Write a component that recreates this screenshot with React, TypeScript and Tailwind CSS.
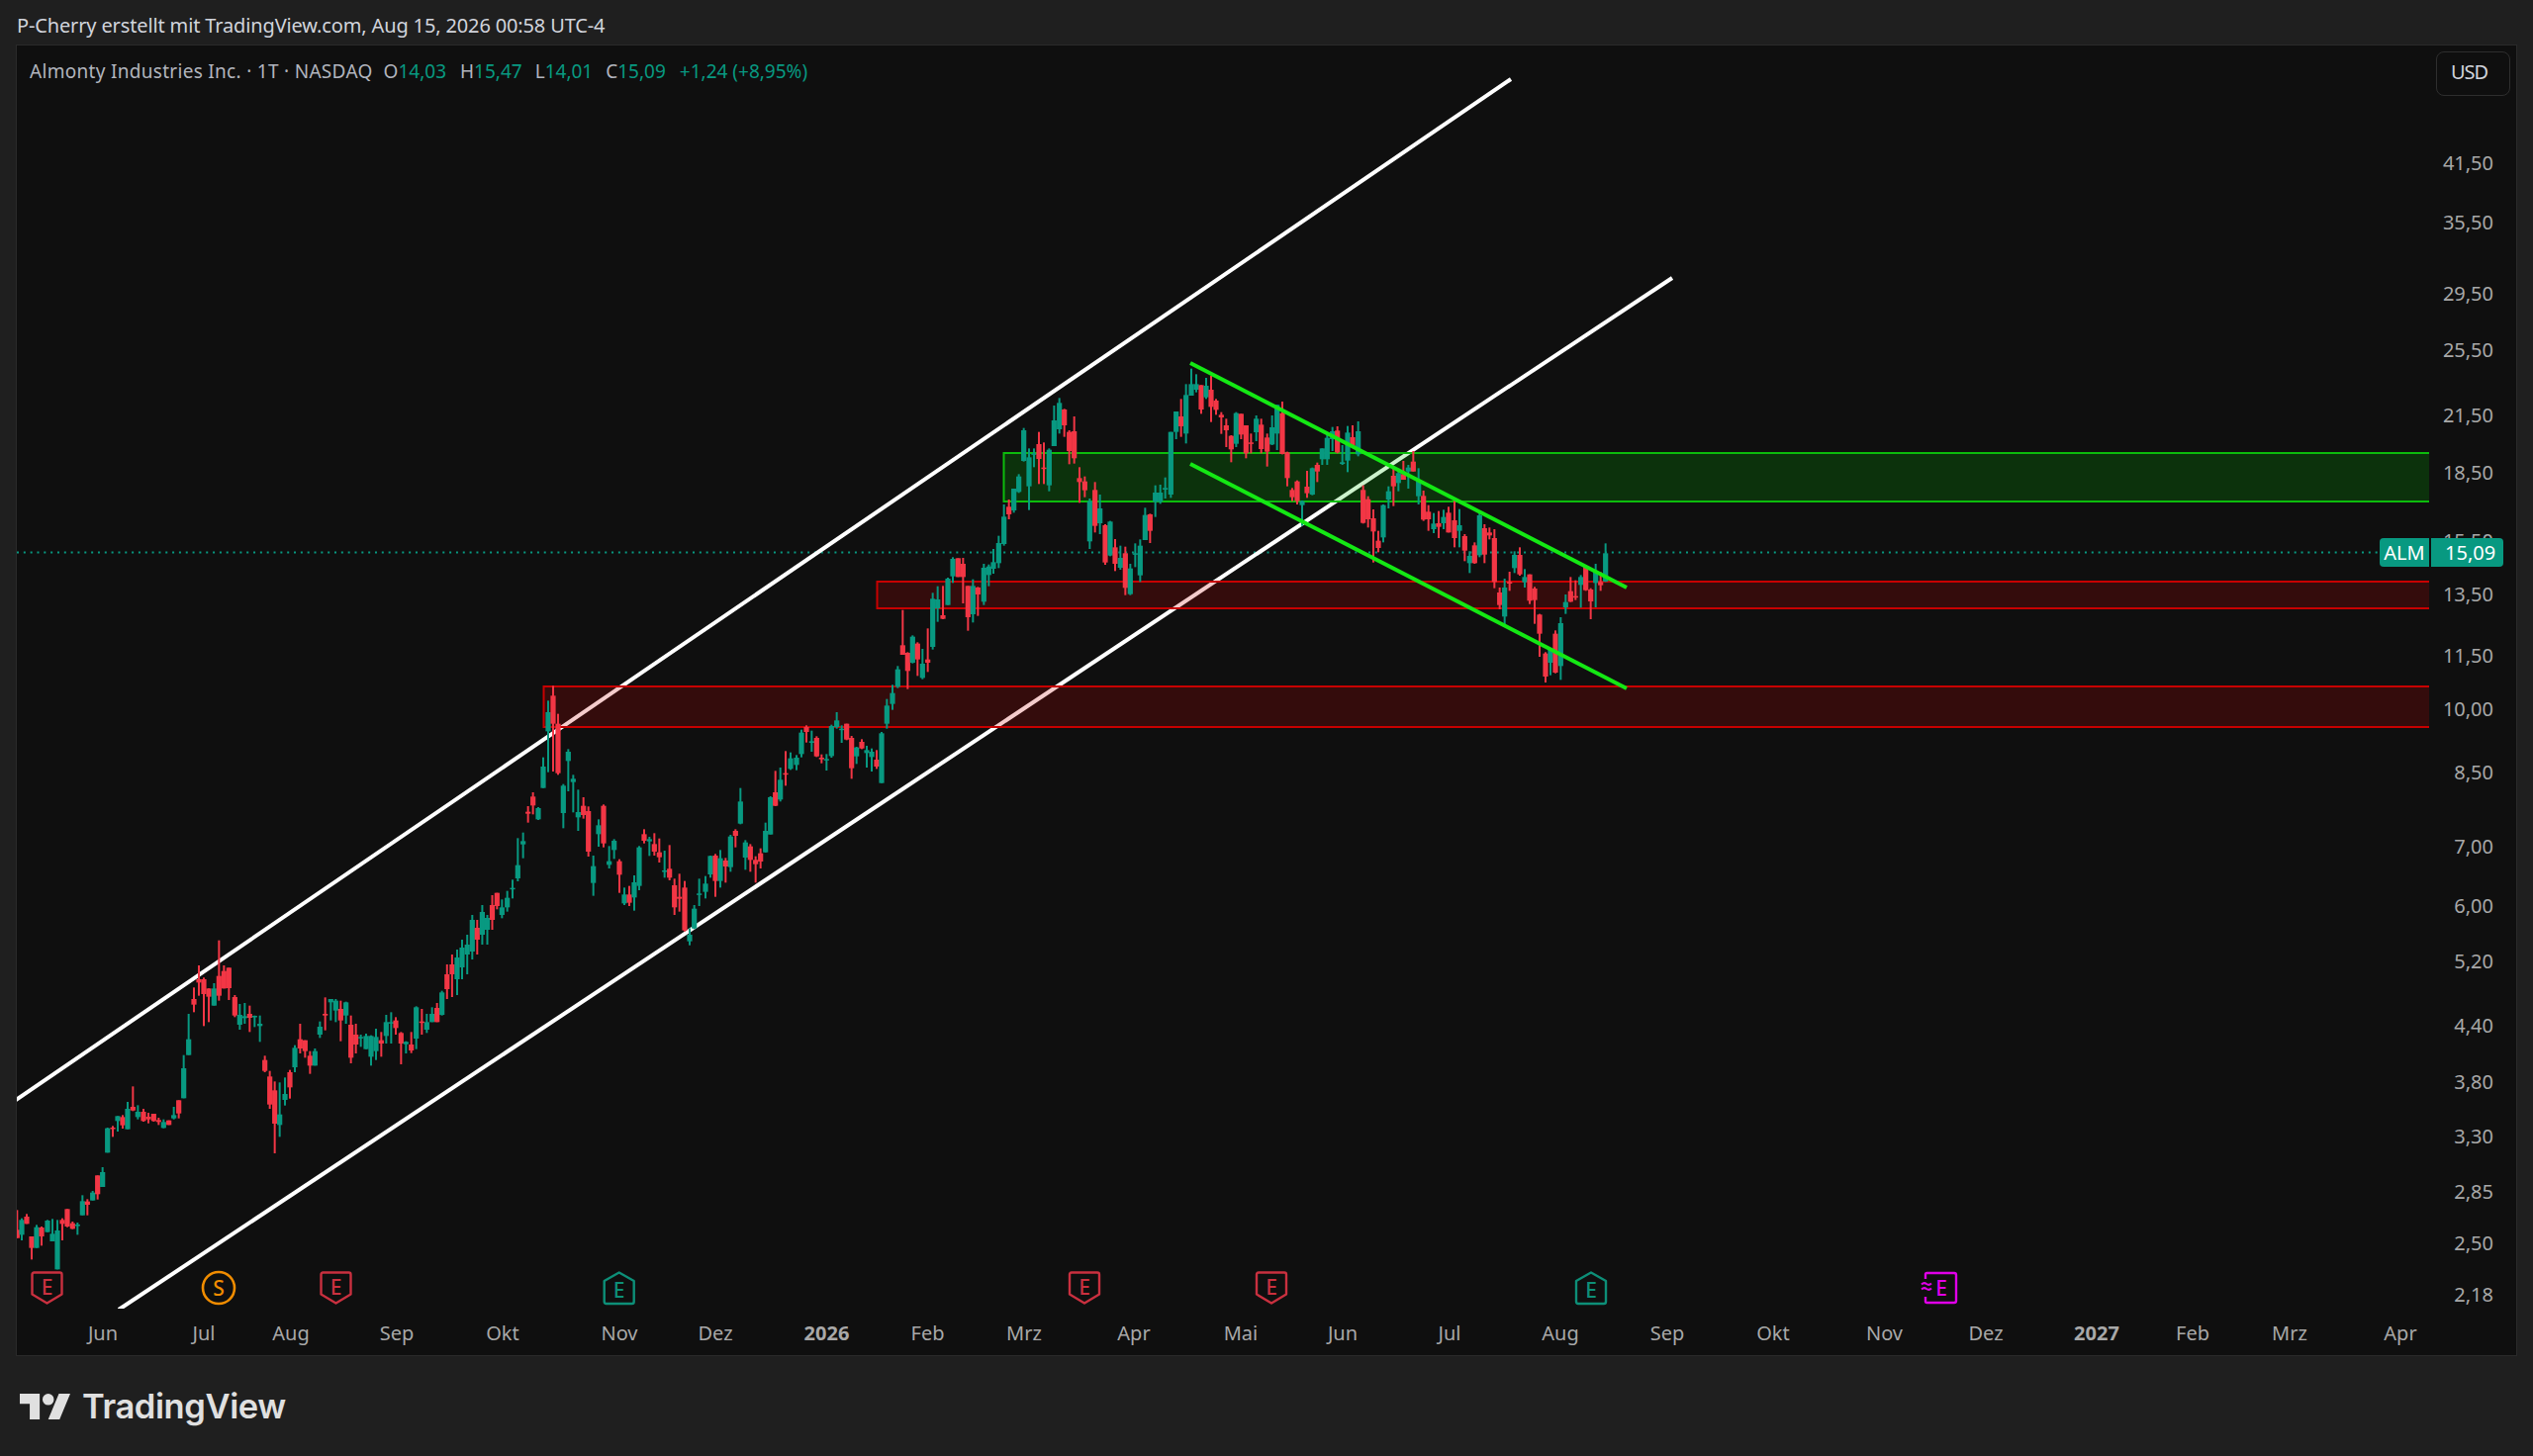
type Candle = [number, number, number, number, number, "r" | "g"];
type Segment = { ox: number; oy: number; s: number; rows: Candle[] };

// candle rows are [x, high, bodyTop, bodyBottom, low, colour]
const segments: Segment[] = [
  {
    ox: 0, oy: 940, s: 3,
    rows: [
      [52,850,910,935,935,"r"],[66,875,880,925,942,"g"],[81,862,870,892,892,"r"],[96,930,930,965,1000,"r"],[111,895,902,965,965,"g"],
      [126,900,903,930,958,"r"],[144,880,882,917,917,"g"],[159,877,922,945,945,"g"],[174,880,912,1030,1030,"g"],[189,875,880,892,942,"r"],
      [204,847,847,900,902,"r"],[220,885,890,907,908,"r"],[235,888,894,898,925,"g"],[250,805,823,866,866,"g"],[265,817,824,834,866,"r"],
      [281,792,797,821,821,"g"],[296,745,745,802,818,"r"],[311,720,735,780,780,"g"],[326,600,602,676,676,"g"],[342,595,600,604,628,"r"],
      [357,565,565,580,612,"g"],[372,562,568,593,603,"r"],[387,522,543,605,605,"g"],[403,475,537,548,550,"r"],[418,532,552,568,575,"g"],
      [435,543,552,580,582,"r"],[450,555,567,575,587,"r"],[466,558,558,580,582,"r"],[481,570,577,583,592,"r"],[496,575,583,601,602,"g"],
      [512,578,578,592,592,"r"],[527,537,562,572,575,"g"],[542,517,517,557,572,"r"],[557,380,420,511,511,"g"],[572,255,332,380,380,"g"],
      [588,175,210,227,250,"r"],[603,108,150,160,200,"r"],[618,145,150,195,292,"r"],[633,178,178,203,280,"r"],[649,162,178,230,230,"g"],
      [664,32,140,200,215,"r"],[679,108,125,178,178,"r"],[694,115,115,177,213,"r"],[712,198,204,260,265,"r"],[727,225,258,288,303,"g"],
      [742,222,262,268,285,"g"],[757,230,255,267,310,"r"],[772,260,261,263,295,"g"],[788,260,285,292,340,"g"],[803,382,395,428,432,"r"],
      [818,428,445,530,543,"r"],[833,460,487,588,678,"r"],[848,463,560,592,628,"g"],[864,448,498,516,533,"g"],[879,425,432,478,512,"r"],
      [894,350,358,417,432,"g"],[910,285,332,360,375,"r"],[925,335,335,368,388,"r"],[940,368,382,412,437,"r"],[955,360,368,412,412,"g"],
      [970,278,294,318,328,"g"],[986,205,255,260,305,"r"],[1003,210,210,220,275,"g"],[1018,210,215,245,280,"g"],[1033,215,240,275,338,"r"],
      [1049,218,220,260,285,"g"],[1064,260,288,388,405,"r"],[1079,285,318,348,375,"r"],[1094,318,325,328,355,"g"],[1110,315,322,362,362,"g"],
      [1125,320,322,385,412,"g"],[1140,300,325,368,395,"g"],[1156,310,335,345,385,"r"],[1171,258,280,322,345,"g"],[1186,250,280,283,345,"g"],
      [1200,265,275,298,318,"r"],
    ],
  },
  {
    ox: 200, oy: 1000, s: 3,
    rows: [
      [616,130,133,165,228,"r"],[631,158,160,167,195,"g"],[647,130,168,186,194,"r"],[662,52,55,150,182,"g"],[679,60,98,102,138,"r"],
      [694,75,100,123,133,"g"],[710,55,75,100,100,"g"],[725,42,57,100,100,"r"],[740,5,10,78,80,"g"],
    ],
  },
  {
    ox: 0, oy: 0, s: 1,
    rows: [
      [451.8,975,985,1000,1010,"r"],[456.9,965,975,985,1008,"r"],[462,960,968,990,1006,"g"],[467,950,958,978,990,"g"],[472.2,945,955,965,985,"g"],
      [477.3,925,930,962,970,"g"],[482.3,930,938,950,965,"r"],[487.4,915,922,945,955,"g"],[492.5,925,928,940,955,"g"],[497.5,905,915,930,940,"r"],
    ],
  },
  {
    ox: 500, oy: 680, s: 3,
    rows: [
      [7,668,668,708,718,"r"],[22,688,712,735,745,"g"],[38,662,683,712,725,"g"],[54,628,653,657,685,"g"],[70,502,584,624,633,"g"],
      [86,485,511,521,563,"g"],[101,405,422,428,455,"r"],[116,363,376,403,430,"r"],[132,408,411,445,447,"g"],[147,257,285,350,350,"g"],
      [162,85,120,178,302,"g"],[177,40,70,155,300,"r"],[192,125,155,305,310,"r"],[208,338,343,426,472,"g"],[223,232,240,268,360,"g"],
      [238,310,322,332,424,"g"],[253,355,423,439,480,"g"],[269,378,404,432,443,"r"],[284,406,420,543,558,"r"],[299,555,587,638,677,"g"],
      [315,445,463,490,528,"g"],[330,400,404,518,530,"r"],[347,526,572,583,594,"g"],[362,505,510,538,565,"g"],[378,566,572,613,668,"r"],
      [393,652,673,700,705,"g"],[408,647,673,698,708,"r"],[423,615,636,682,722,"g"],[438,526,530,647,660,"g"],[453,475,490,510,518,"r"],
      [469,498,505,512,556,"g"],[484,487,520,543,555,"r"],[499,503,545,560,576,"r"],[515,540,600,603,622,"g"],[530,523,595,622,630,"r"],
      [545,625,645,712,735,"r"],[560,610,680,686,725,"r"],[576,632,652,782,785,"r"],[591,775,795,815,827,"g"],[605,705,716,776,778,"g"],
      [620,625,670,674,708,"g"],[639,617,640,665,685,"g"],[654,555,556,612,622,"g"],[669,550,555,632,680,"r"],[684,538,563,632,652,"g"],
      [700,562,570,588,637,"r"],[715,492,497,590,604,"g"],[730,475,480,495,530,"r"],[745,350,391,458,460,"g"],[760,508,515,561,598,"g"],
      [775,520,527,568,604,"r"],[791,557,568,581,637,"r"],[806,533,548,573,594,"r"],[821,455,480,545,546,"g"],[836,375,378,491,491,"g"],
      [851,298,363,404,405,"r"],[866,288,325,385,391,"g"],[882,238,305,309,343,"r"],[897,242,260,292,295,"g"],[915,250,258,280,296,"g"],
      [930,173,182,247,257,"g"],[945,160,165,180,212,"r"],[961,176,208,213,240,"g"],[976,193,198,254,256,"r"],[991,248,258,263,275,"r"],
      [1006,247,262,266,297,"g"],[1021,158,162,253,258,"g"],[1037,120,145,165,170,"g"],[1052,160,170,174,213,"g"],[1067,155,155,203,205,"r"],
      [1082,192,198,290,322,"r"],[1097,225,227,254,277,"g"],[1113,202,210,230,232,"r"],[1128,222,235,244,288,"g"],[1143,230,240,256,300,"g"],
      [1158,235,264,285,292,"r"],[1173,180,184,335,335,"g"],[1189,80,100,155,170,"g"],
    ],
  },
  {
    ox: 880, oy: 560, s: 3,
    rows: [
      [66,397,422,455,473,"g"],[82,340,350,403,407,"g"],[97,170,277,306,306,"r"],[112,298,300,355,410,"r"],[127,247,251,330,332,"g"],
      [142,268,272,320,370,"r"],[157,288,333,376,380,"g"],[173,226,320,330,358,"r"],[188,118,136,282,290,"g"],[203,98,138,165,206,"g"],
      [219,97,186,197,198,"r"],[234,72,75,155,155,"g"],[249,10,15,68,88,"g"],[265,13,13,70,70,"r"],[280,12,30,70,150,"r"],
      [295,97,97,192,233,"r"],[310,77,97,183,208,"g"],[325,100,102,123,188,"r"],[343,30,42,145,155,"g"],[358,32,38,64,98,"g"],
    ],
  },
  {
    ox: 1000, oy: 370, s: 3,
    rows: [
      [12,555,595,615,630,"g"],[28,515,537,598,613,"g"],[44,420,457,540,545,"g"],[59,405,427,450,465,"r"],[74,372,372,438,445,"g"],
      [89,328,335,382,385,"g"],[104,188,195,288,290,"g"],[120,250,277,365,437,"g"],[135,250,265,268,307,"g"],[150,200,237,282,358,"r"],
      [165,232,308,312,358,"r"],[181,250,254,362,380,"g"],[196,120,165,243,243,"g"],[212,97,112,192,205,"g"],[227,130,132,180,215,"r"],
      [242,195,200,258,298,"r"],[257,153,198,280,296,"r"],[273,307,340,352,415,"r"],[289,335,350,377,398,"r"],[304,402,410,532,555,"g"],
      [320,352,376,485,505,"r"],[335,390,432,477,510,"g"],[351,480,483,596,603,"r"],[366,470,472,575,577,"g"],[381,525,550,600,622,"r"],
      [397,545,582,612,618,"g"],[412,548,568,673,695,"r"],[427,600,614,692,695,"g"],[442,538,568,572,610,"g"],[457,526,545,635,655,"g"],
      [472,430,452,528,528,"g"],[487,448,450,500,537,"r"],[503,362,384,412,458,"g"],[518,360,384,412,418,"g"],[533,338,370,375,402,"g"],
      [550,200,200,390,400,"g"],[566,138,138,200,222,"g"],[581,100,153,183,215,"r"],[596,55,88,205,235,"g"],[612,8,55,90,90,"g"],
      [627,25,55,72,80,"g"],[642,58,58,132,145,"r"],[657,36,60,95,100,"g"],[672,30,72,124,170,"r"],[687,100,105,133,148,"r"],
      [703,140,148,156,206,"r"],[718,160,180,195,246,"r"],[733,210,212,253,292,"r"],[748,140,143,236,246,"g"],[763,145,145,208,222,"r"],
      [778,180,180,265,280,"r"],[793,205,232,235,265,"r"],[809,150,160,201,228,"g"],[824,160,178,252,265,"r"],[842,205,217,260,305,"r"],
      [857,150,186,238,240,"g"],[872,118,118,205,255,"g"],[888,108,143,267,268,"r"],[903,260,262,340,365,"r"],[918,370,376,398,410,"r"],
      [933,347,350,410,420,"r"],[948,408,410,422,485,"g"],[963,318,366,386,400,"r"],[979,308,310,390,392,"g"],[994,293,300,320,352,"r"],
      [1009,250,250,283,300,"g"],[1024,205,218,283,300,"g"],[1040,185,198,222,258,"g"],[1055,183,196,262,265,"r"],[1070,240,292,297,300,"g"],
      [1086,182,202,287,322,"g"],[1101,180,216,245,245,"r"],[1118,168,198,268,274,"g"],[1133,362,376,476,478,"r"],[1148,395,404,465,490,"r"],
      [1164,435,462,502,596,"r"],[1179,500,530,552,565,"r"],[1194,420,422,520,535,"g"],
    ],
  },
  {
    ox: 1400, oy: 370, s: 3,
    rows: [
      [10,365,380,405,432,"g"],[25,305,333,365,425,"r"],[40,315,325,355,380,"g"],[55,288,328,345,345,"r"],[70,300,308,320,372,"g"],
      [85,258,290,320,320,"r"],[101,310,348,395,420,"g"],[116,378,394,466,470,"r"],[131,422,442,465,500,"r"],[147,446,478,495,507,"g"],
      [162,440,477,488,522,"r"],[177,436,458,477,495,"g"],[192,427,445,505,505,"r"],[210,402,468,522,550,"r"],[225,434,483,500,550,"g"],
      [241,510,516,560,592,"r"],[256,562,576,598,628,"g"],[271,535,544,598,600,"r"],[286,438,453,574,580,"g"],[301,480,492,572,598,"r"],
      [316,490,505,514,526,"r"],[331,495,522,655,674,"r"],[347,672,687,725,738,"r"],[362,645,672,760,790,"g"],[377,624,655,660,682,"r"],
      [392,562,573,613,628,"g"],[408,550,573,632,636,"r"],[423,616,640,656,672,"g"],[438,632,632,712,722,"r"],[453,670,675,710,782,"r"],
      [468,752,754,812,882,"r"],[486,868,872,942,960,"r"],[501,855,860,900,938,"g"],[516,802,812,930,932,"r"],[532,762,780,910,952,"g"],
      [547,693,716,732,752,"g"],[562,640,683,715,716,"r"],[577,650,698,702,710,"r"],[593,634,640,664,733,"g"],[608,604,606,680,682,"r"],
      [623,674,678,714,768,"r"],[638,600,624,658,732,"g"],[653,625,655,665,682,"r"],[668,538,568,654,655,"g"],
    ],
  },
];

const candles = segments.flatMap(({ ox, oy, s, rows }) =>
  rows.map(([x, hi, top, bot, lo, c]) => ({
    x: ox + x / s,
    hi: oy + hi / s,
    top: oy + top / s,
    bot: oy + bot / s,
    lo: oy + lo / s,
    fill: c === "r" ? "#f23645" : "#089981",
  }))
);

const prices: [string, number][] = [
  ["41,50", 165], ["35,50", 225], ["29,50", 297], ["25,50", 354], ["21,50", 420],
  ["18,50", 478], ["15,50", 547], ["13,50", 601], ["11,50", 663], ["10,00", 717],
  ["8,50", 781], ["7,00", 856], ["6,00", 916], ["5,20", 972], ["4,40", 1037],
  ["3,80", 1094], ["3,30", 1149], ["2,85", 1205], ["2,50", 1257], ["2,18", 1309],
];

const months: [string, number, boolean?][] = [
  ["Jun", 104], ["Jul", 206], ["Aug", 294], ["Sep", 401], ["Okt", 508], ["Nov", 626],
  ["Dez", 723], ["2026", 835.5, true], ["Feb", 937.5], ["Mrz", 1035], ["Apr", 1146], ["Mai", 1254],
  ["Jun", 1357], ["Jul", 1465], ["Aug", 1577], ["Sep", 1685], ["Okt", 1792], ["Nov", 1904.5],
  ["Dez", 2007], ["2027", 2119, true], ["Feb", 2216], ["Mrz", 2314], ["Apr", 2426],
];

const ShieldE = ({ cx }: { cx: number }) => (
  <g transform={`translate(${cx - 16} 1285)`}>
    <path d="M3 1.5H29Q31 1.5 31 3.5V23.5L16 32.5L1 23.5V3.5Q1 1.5 3 1.5Z" fill="#0f0f0f" stroke="#c9303f" strokeWidth="2.4" strokeLinejoin="round" />
    <text x="16" y="24" textAnchor="middle" fontSize="21" fontFamily="Noto Sans" fontWeight="500" fill="#c9303f">E</text>
  </g>
);

const HouseE = ({ cx }: { cx: number }) => (
  <g transform={`translate(${cx - 16} 1285)`}>
    <path d="M16 1.5L31 10V31Q31 33 29 33H3Q1 33 1 31V10Z" fill="#0f0f0f" stroke="#0d8f78" strokeWidth="2.4" strokeLinejoin="round" />
    <text x="16" y="27" textAnchor="middle" fontSize="21" fontFamily="Noto Sans" fontWeight="500" fill="#0d8f78">E</text>
  </g>
);

const App = () => {
  return (
    <div className="w-[2560px] h-[1472px] bg-[#1f1f1f] flex flex-col font-['Noto_Sans',sans-serif] overflow-hidden">
      <div className="h-[45px] shrink-0 flex items-center pl-[17px] pt-[6px] text-[20px] tracking-[-0.14px] text-[#d1d4dc]">
        P-Cherry erstellt mit TradingView.com, Aug 15, 2026 00:58 UTC-4
      </div>

      <div className="relative ml-[16px] w-[2528px] h-[1326px] shrink-0 border border-[#2a2a2a] bg-[#0f0f0f] flex">
        <div className="w-[2438px] flex flex-col">
          <svg width="2438" height="1277" viewBox="17 46 2438 1277" className="block">
            <line x1="17" y1="558.5" x2="2405" y2="558.5" stroke="#089981" strokeWidth="2" strokeDasharray="2 4.83" />
            <line x1="16" y1="1112" x2="1527" y2="80" stroke="#ffffff" strokeWidth="4" />
            <line x1="120" y1="1324" x2="1690" y2="281" stroke="#ffffff" strokeWidth="4" />

            <rect x="1014.5" y="458" width="1450" height="49" fill="rgb(0 190 0 / 0.2)" stroke="#0cbc0c" strokeWidth="2" />
            <rect x="886.5" y="588" width="1578" height="27" fill="rgb(200 0 0 / 0.2)" stroke="#c80000" strokeWidth="2" />
            <rect x="549.5" y="694" width="1915" height="41" fill="rgb(200 0 0 / 0.2)" stroke="#c80000" strokeWidth="2" />

            {candles.map((c, i) => (
              <g key={i} fill={c.fill}>
                <rect x={c.x - 1} y={c.hi} width="2" height={c.lo - c.hi} />
                <rect x={c.x - 2.6} y={c.top} width="5.2" height={Math.max(c.bot - c.top, 1.5)} />
              </g>
            ))}

            <line x1="1203" y1="367" x2="1644" y2="594" stroke="#14e814" strokeWidth="4" />
            <line x1="1203" y1="469" x2="1644" y2="696" stroke="#14e814" strokeWidth="4" />

            <ShieldE cx={47.5} />
            <ShieldE cx={339.5} />
            <ShieldE cx={1096} />
            <ShieldE cx={1285} />
            <HouseE cx={625.7} />
            <HouseE cx={1608} />

            <circle cx="221" cy="1302" r="16" fill="#0f0f0f" stroke="#f08c00" strokeWidth="2.6" />
            <text x="221" y="1310" textAnchor="middle" fontSize="21" fontFamily="Noto Sans" fontWeight="500" fill="#f08c00">S</text>

            <g transform="translate(1942 1286)">
              <path d="M4 7V2.5Q4 1 5.5 1H33Q35 1 35 3V29Q35 31 33 31H5.5Q4 31 4 29.5V25" fill="none" stroke="#e000e8" strokeWidth="2.4" />
              <text x="20" y="24" textAnchor="middle" fontSize="21" fontFamily="Noto Sans" fontWeight="500" fill="#e000e8">E</text>
              <path d="M0 12.5Q2.5 10 5 12Q7.5 14 10 11.5M0 17.5Q2.5 15 5 17Q7.5 19 10 16.5" fill="none" stroke="#e000e8" strokeWidth="2" />
            </g>
          </svg>

          <div className="relative flex-1 text-[20px] text-[#a8a8a8]">
            {months.map(([label, x, bold]) => (
              <span
                key={label + x}
                className={`absolute top-[10px] -translate-x-1/2 ${bold ? "font-bold" : ""}`}
                style={{ left: x - 17 }}
              >
                {label}
              </span>
            ))}
          </div>
        </div>

        <div className="relative flex-1 text-[20px] text-[#a8a8a8]">
          {prices.map(([label, y]) => (
            <span key={label} className="absolute right-[23px] -translate-y-1/2 leading-none" style={{ top: y - 46 }}>
              {label}
            </span>
          ))}
        </div>

        <div className="absolute left-[13px] top-[13px] flex items-center text-[19px] leading-[26px] text-[#b2b5be]">
          <span className="tracking-[0.3px]">Almonty Industries Inc. · 1T · NASDAQ</span>
          <span className="ml-[11px]">O<span className="text-[#089981]">14,03</span></span>
          <span className="ml-[14px]">H<span className="text-[#089981]">15,47</span></span>
          <span className="ml-[13px]">L<span className="text-[#089981]">14,01</span></span>
          <span className="ml-[13px]">C<span className="text-[#089981]">15,09</span></span>
          <span className="ml-[14px] text-[#089981]">+1,24 (+8,95%)</span>
        </div>

        <div className="absolute right-[6px] top-[6px] w-[75px] h-[45px] rounded-[8px] border border-[#2e2e2e] flex items-center pl-[14px] pb-[3px] text-[20px] tracking-[-1px] text-[#d1d4dc]">
          USD
        </div>

        <div className="absolute left-[2388px] top-[498px] flex text-white text-[20px] leading-[29px] gap-[2px]">
          <span className="w-[50px] h-[29px] bg-[#089981] rounded-l-[4px] text-center">ALM</span>
          <span className="w-[73px] h-[29px] bg-[#089981] rounded-r-[4px] pl-[14px]">15,09</span>
        </div>
      </div>

      <div className="flex-1 flex items-center pl-[20px]">
        <svg width="51" height="26" viewBox="0 4 35.5 18" fill="#e0e0e0" className="shrink-0">
          <path d="M14 22H7V11H0V4h14v18zM28 22h-8l7.5-18h8L28 22z" />
          <circle cx="20" cy="8" r="4" />
        </svg>
        <span className="ml-[12px] text-[34.5px] font-semibold text-[#e0e0e0] font-['Inter',sans-serif] tracking-[-0.4px]">TradingView</span>
      </div>
    </div>
  );
};

export default App;
